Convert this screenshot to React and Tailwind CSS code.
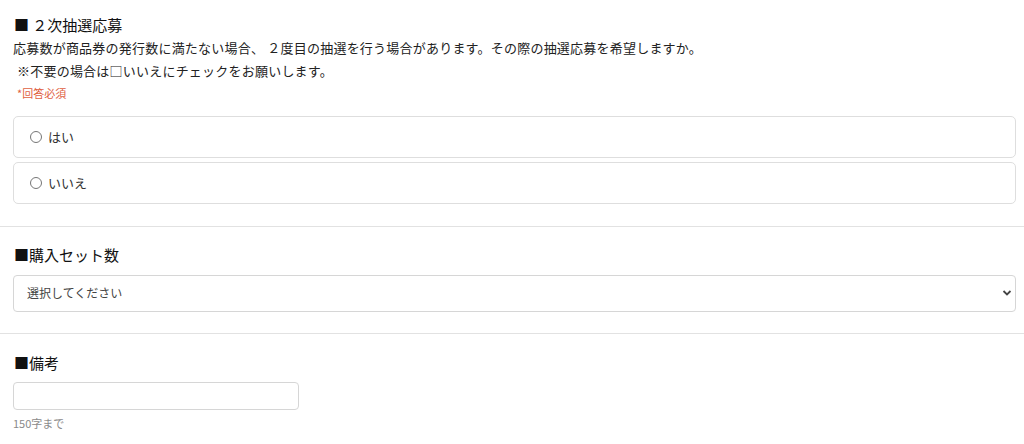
import React from "react";

const font = { fontFamily: '"Noto Sans CJK JP", "Noto Sans", sans-serif' };

function Radio({ label }) {
  return (
    <label className="flex items-center h-[42px] border border-[#dedede] rounded-[5px] pl-[16px] bg-white">
      <span className="w-[12px] h-[12px] rounded-full border border-[#767676] bg-white"></span>
      <span className="ml-[6px] text-[13px] text-[#333]">{label}</span>
    </label>
  );
}

export default function App() {
  return (
    <div className="w-[1024px] h-[444px] bg-white overflow-hidden text-[#222]" style={font}>
      <section className="pl-[13px] pr-[8px] pt-[15px] pb-[22px]">
        <h3 className="text-[15px] leading-[20px] pl-[1px] text-[#111]">■ ２次抽選応募</h3>
        <p className="text-[13px] leading-[23px] mt-[1px] tracking-[0.22px] text-[#222]">
          応募数が商品券の発行数に満たない場合、 ２度目の抽選を行う場合があります。その際の抽選応募を希望しますか。
          <br />
          <span className="pl-[4px]">※不要の場合は□いいえにチェックをお願いします。</span>
        </p>
        <p className="text-[11px] leading-[16px] mt-[3px] pl-[4px] text-[#e0603f]">*回答必須</p>
        <div className="mt-[15px] flex flex-col gap-[4px]">
          <Radio label="はい" />
          <Radio label="いいえ" />
        </div>
      </section>
      <div className="border-t border-[#e2e2e2]"></div>
      <section className="pl-[13px] pr-[8px] pt-[18px] pb-[21px]">
        <h3 className="text-[15px] leading-[20px] pl-[1px] text-[#111]">■購入セット数</h3>
        <div className="relative mt-[10px]">
          <select className="appearance-none w-full h-[37px] border border-[#d6d6d6] rounded-[4px] pl-[13px] pb-[1px] text-[12px] text-[#444] bg-white outline-none">
            <option>選択してください</option>
          </select>
          <svg className="absolute right-[4px] top-[14px] pointer-events-none" width="10" height="8" viewBox="0 0 10 8">
            <path d="M1.5 2 L5 5.5 L8.5 2" fill="none" stroke="#444" strokeWidth="1.8" />
          </svg>
        </div>
      </section>
      <div className="border-t border-[#e2e2e2]"></div>
      <section className="pl-[13px] pr-[8px] pt-[19px]">
        <h3 className="text-[15px] leading-[20px] pl-[1px] text-[#111]">■備考</h3>
        <input className="block mt-[9px] w-[286px] h-[28px] border border-[#d6d6d6] rounded-[4px] outline-none" />
        <p className="mt-[6px] text-[11px] leading-[14px] text-[#8a8a8a]">150字まで</p>
      </section>
    </div>
  );
}
